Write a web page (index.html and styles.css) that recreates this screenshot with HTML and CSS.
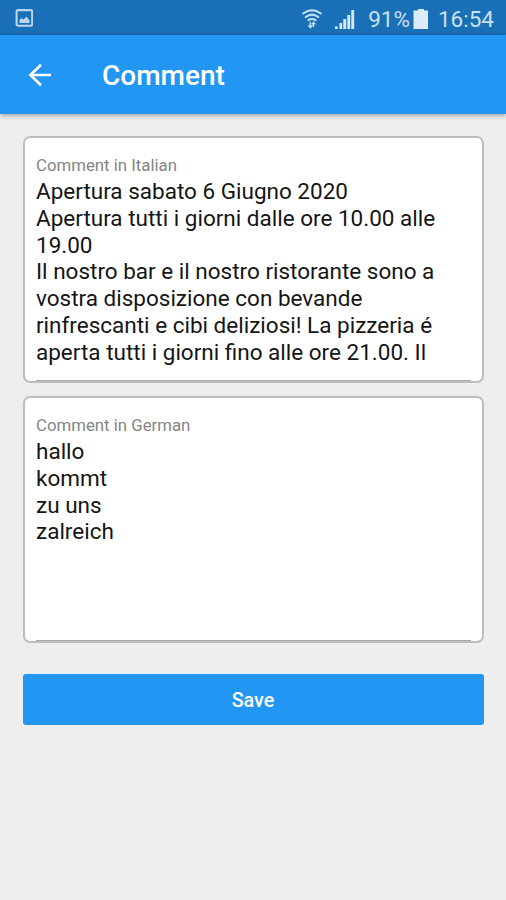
FILE: index.html
```html
<!DOCTYPE html>
<html lang="en">
<head>
<meta charset="utf-8">
<title>Comment</title>
<link rel="stylesheet" href="styles.css">
</head>
<body>
<div class="status">
  <svg class="picture" width="18" height="18" viewBox="0 0 18 18"><rect x="1.600" y="1.1" width="15.6" height="15.6" rx="1.5" fill="none" stroke="#b9d5f0" stroke-width="2.1"/><path d="M4.500 14v-3l2-2 2 1.5L11.500 7.500l3 4V14z" fill="#b9d5f0"/></svg>
  <div class="indicators">
    <svg class="wifi" width="20" height="20" viewBox="0 0 20 20" fill="none" stroke="#c5dff3" stroke-width="2.1" stroke-linecap="round"><path d="M1.200 4.500Q10-2 18.800 4.500M3.800 8Q10 3.300 16.200 8M6.500 11.200Q10 8.700 13.500 11.200"/><path d="M8.300 13.500v5m-1.600-1.700 1.600 1.900 1.600-1.900M11.500 17.500v-4m-1.300 1.300 1.300-1.300 1.300 1.300" stroke-width="1.400"/></svg>
    <svg class="signal" width="20" height="19" viewBox="0 0 20 19" fill="#d5e8f7"><path d="M0 16.500h2.700V19H0zM4.500 13h2.700v6H4.500zM8.300 9h2.900v10H8.300zM12.300 5h2.900v14h-2.900zM16.300 0h2.900v19h-2.900z"/></svg>
    <span class="percent">91%</span>
    <svg class="battery" width="16" height="20" viewBox="0 0 16 20" fill="#dcebf7"><path d="M5 0h6v1.500h4v18.500H.500V1.500H5z"/></svg>
    <time>16:54</time>
  </div>
</div>
<header>
  <svg class="back" width="24" height="24" viewBox="0 0 24 24" fill="none" stroke="#fff" stroke-width="2.700"><path d="M24 12H3.500M14 1.800 3.500 12 14 22.200"/></svg>
  <h1>Comment</h1>
</header>
<main>
  <section class="field">
    <h2>Comment in Italian</h2>
    <p>Apertura sabato 6 Giugno 2020<br>Apertura tutti i giorni dalle ore 10.00 alle<br>19.00<br>Il nostro bar e il nostro ristorante sono a<br>vostra disposizione con bevande<br>rinfrescanti e cibi deliziosi! La pizzeria é<br>aperta tutti i giorni fino alle ore 21.00. Il</p>
  </section>
  <section class="field">
    <h2>Comment in German</h2>
    <p>hallo<br>kommt<br>zu uns<br>zalreich</p>
  </section>
  <button>Save</button>
</main>
</body>
</html>
```
FILE: styles.css
```css
* { box-sizing: border-box; }
body { margin: 0; height: 900px; overflow: hidden; background: #eee; font-family: Roboto, sans-serif; }
.status { height: 35px; padding: 0 12px 0 15px; display: flex; align-items: center; justify-content: space-between; background: #1a70b7; color: #c9e0f3; }
.picture { margin-top: 1px; }
.indicators { display: flex; align-items: center; font-size: 22.5px; line-height: 35px; padding-top: 3px; }
.wifi { margin-right: 13px; }
.signal { margin-right: 13px; }
.battery { margin: 0 9px 0 3px; }
header { height: 79px; display: flex; align-items: center; padding-left: 27px; background: #2196f3; box-shadow: 0 1px 5px rgba(0, 0, 0, .4); }
h1 { margin: 3px 0 0 51px; font-size: 28px; font-weight: 500; line-height: 34px; color: #fff; }
main { display: flex; flex-direction: column; padding: 22px 22px 0 23px; }
.field { height: 247px; margin-bottom: 13px; padding: 18px 11px 0 11px; border: 2px solid #bdbdbd; border-radius: 7px; background: #fff linear-gradient(#aaa, #aaa) 50% 100% / calc(100% - 22px) 1px no-repeat; }
h2 { margin: 0; font-size: 16.8px; line-height: 19px; font-weight: 400; color: #858585; }
p { margin: 3px 0 0; font-size: 22.5px; line-height: 26.8px; color: #151515; white-space: nowrap; }
button { height: 51px; margin-top: 18px; padding: 2px 1px 0 0; border: 0; border-radius: 3px; background: #2196f3; color: #fff; font: 500 19.7px/24px Roboto, sans-serif; }
```
